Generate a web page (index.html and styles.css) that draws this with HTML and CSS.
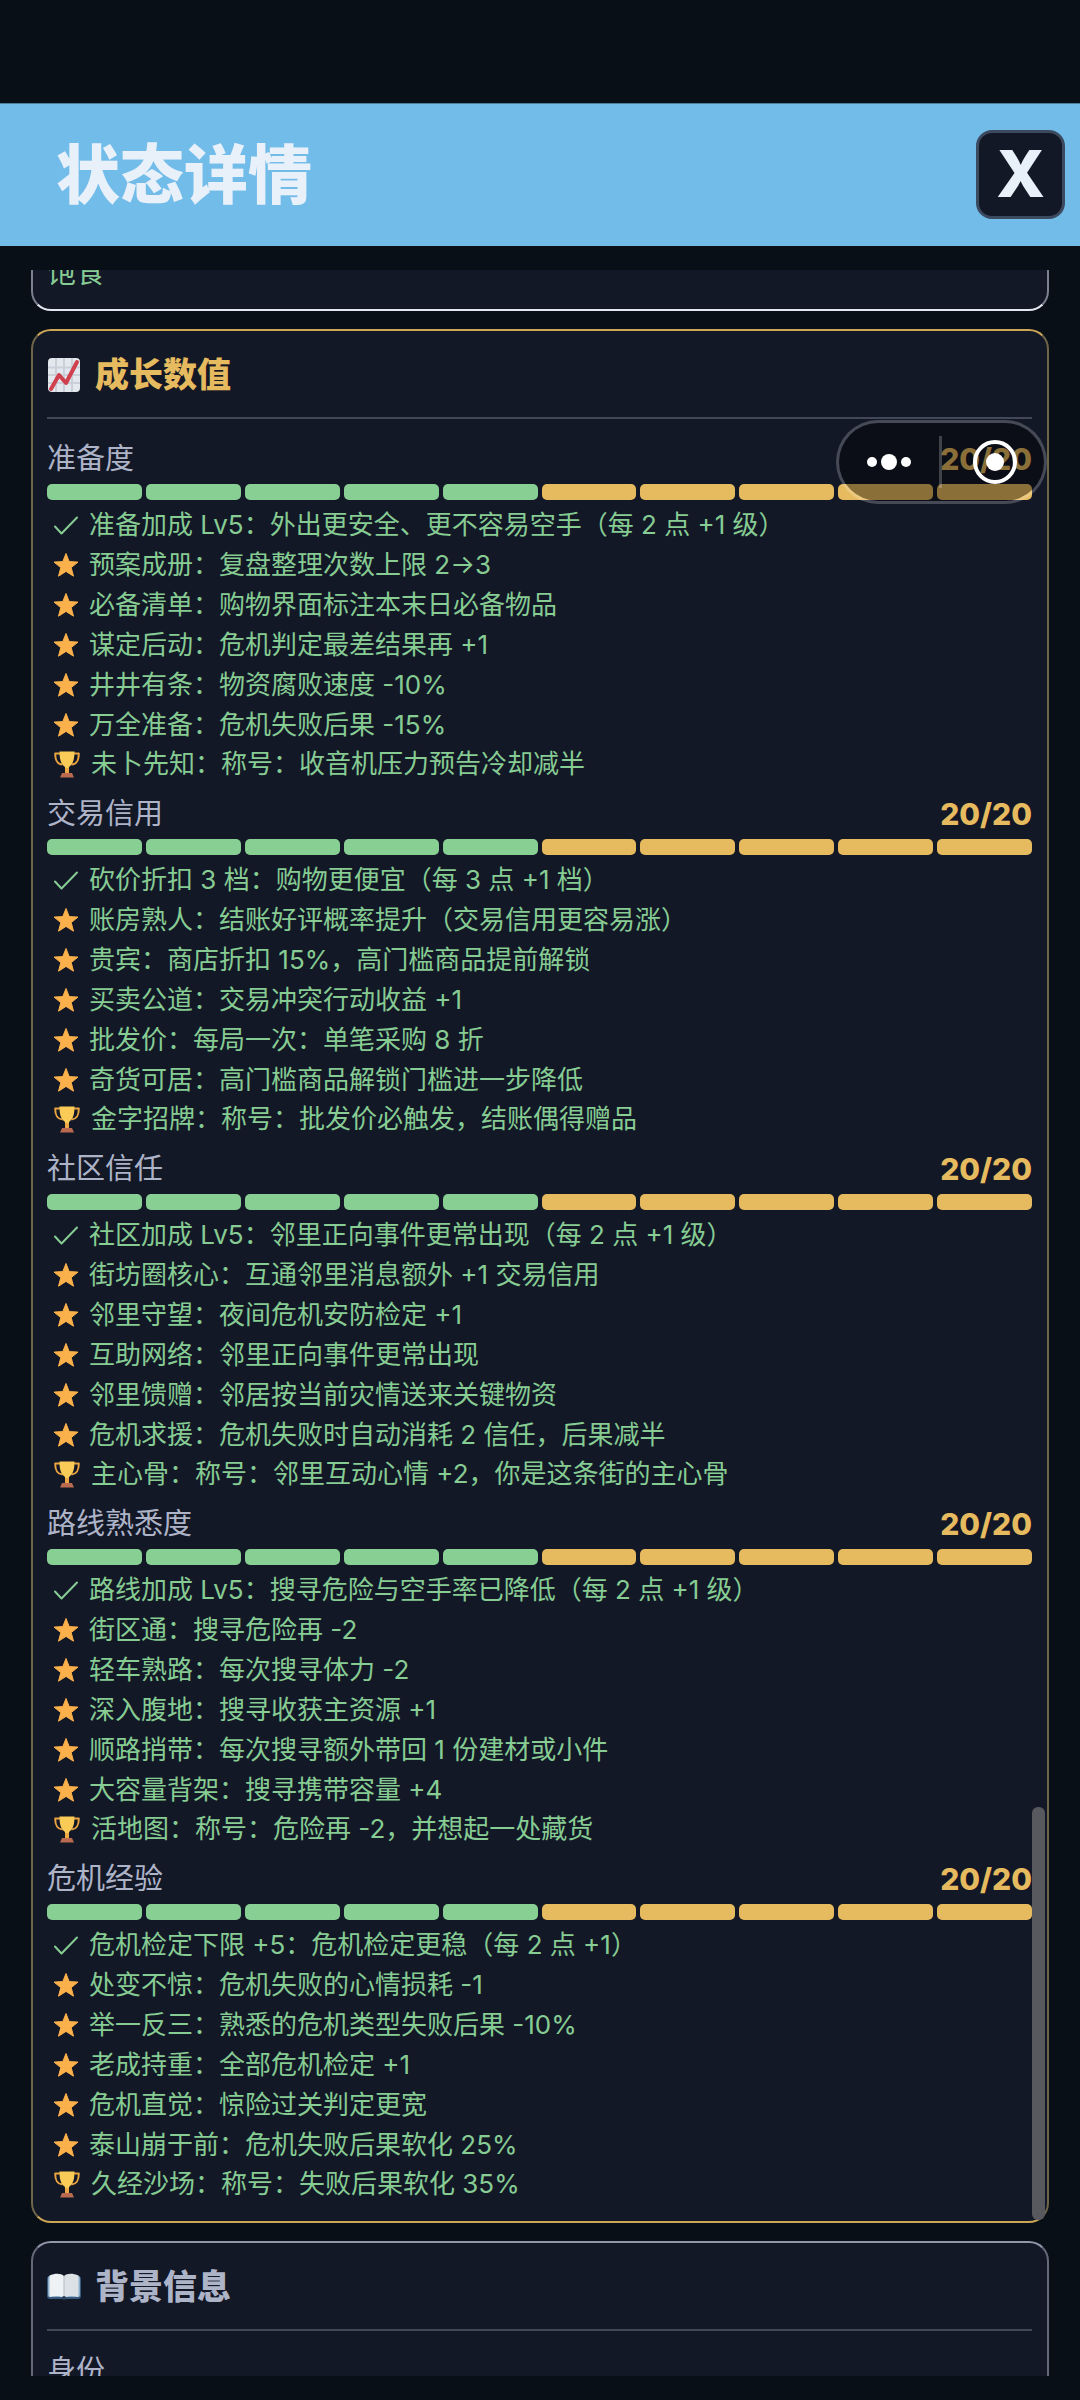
FILE: index.html
```html
<!DOCTYPE html>
<html lang="zh-CN">
<head>
  <meta charset="UTF-8" />
  <meta name="viewport" content="width=device-width, initial-scale=1.0"/>
  <title>状态详情</title>
  <link rel="stylesheet" href="styles.css">
</head>
<body>
  <!-- Shared icons -->
  <svg class="sprite" aria-hidden="true">
    <symbol id="check" viewBox="0 0 26 26">
      <path d="M2 14.5 8.500 21.500 24 5.500" fill="none" stroke="#86cc93" stroke-width="2" stroke-linecap="round" stroke-linejoin="round"/>
    </symbol>
    <symbol id="star" viewBox="0 0 26 26">
      <path d="M13 1.500 16.200 9.600 25 10.100 18.200 15.600 20.500 24.200 13 19.400 5.500 24.200 7.800 15.600 1 10.100 9.800 9.600Z" fill="#fbb14b" stroke="#fbb14b" stroke-width="1" stroke-linejoin="round"/>
    </symbol>
    <symbol id="trophy" viewBox="0 0 28 28">
      <path d="M8 3.500H2.200C2.200 10 3.500 14 9.500 14.500M20 3.500h5.800C25.800 10 24.500 14 18.500 14.500" fill="none" stroke="#e9a33f" stroke-width="2" stroke-linejoin="round"/>
      <path d="M6.500 1.500h15C21.500 9.500 20 14 16 17v5h-4v-5C8 14 6.500 9.500 6.500 1.500Z" fill="#fbcb58"/>
      <path d="M12 18h4v5h-4Z" fill="#eda945"/>
      <path d="M9 23h10l2 4.500H7Z" fill="#b96a4f"/>
    </symbol>
  </svg>

  <header class="topbar">
    <h1>状态详情</h1>
    <button class="close-btn" type="button" aria-label="关闭">X</button>
  </header>

  <main class="content">
    <div class="list">
      <section class="card needs">
        <p class="need-value">饱食</p>
      </section>

      <section class="card growth">
        <h2>
          <svg viewBox="0 0 34 34" aria-hidden="true">
            <rect x="1" y="0" width="32" height="34" rx="4" fill="#e3e8ee"/>
            <path d="M1 9.500h32M1 17h32M1 25h32M9 0v34M17 0v34M25 0v34" stroke="#c9d0da" stroke-width="2"/>
            <path d="M4 31 12 17 19 25 30 4" fill="none" stroke="#d0414f" stroke-width="4" stroke-linecap="round" stroke-linejoin="round"/>
          </svg>
          成长数值
        </h2>

        <div class="stat">
          <div class="stat-head"><h3>准备度</h3><span>20/20</span></div>
          <div class="bar"><i></i><i></i><i></i><i></i><i></i><i></i><i></i><i></i><i></i><i></i></div>
          <ul>
            <li><svg><use href="#check"/></svg>准备加成 Lv5：外出更安全、更不容易空手（每 2 点 +1 级）</li>
            <li><svg><use href="#star"/></svg>预案成册：复盘整理次数上限 2→3</li>
            <li><svg><use href="#star"/></svg>必备清单：购物界面标注本末日必备物品</li>
            <li><svg><use href="#star"/></svg>谋定后动：危机判定最差结果再 +1</li>
            <li><svg><use href="#star"/></svg>井井有条：物资腐败速度 -10%</li>
            <li><svg><use href="#star"/></svg>万全准备：危机失败后果 -15%</li>
            <li class="title-perk"><svg><use href="#trophy"/></svg>未卜先知：称号：收音机压力预告冷却减半</li>
          </ul>
        </div>

        <div class="stat">
          <div class="stat-head"><h3>交易信用</h3><span>20/20</span></div>
          <div class="bar"><i></i><i></i><i></i><i></i><i></i><i></i><i></i><i></i><i></i><i></i></div>
          <ul>
            <li><svg><use href="#check"/></svg>砍价折扣 3 档：购物更便宜（每 3 点 +1 档）</li>
            <li><svg><use href="#star"/></svg>账房熟人：结账好评概率提升（交易信用更容易涨）</li>
            <li><svg><use href="#star"/></svg>贵宾：商店折扣 15%，高门槛商品提前解锁</li>
            <li><svg><use href="#star"/></svg>买卖公道：交易冲突行动收益 +1</li>
            <li><svg><use href="#star"/></svg>批发价：每局一次：单笔采购 8 折</li>
            <li><svg><use href="#star"/></svg>奇货可居：高门槛商品解锁门槛进一步降低</li>
            <li class="title-perk"><svg><use href="#trophy"/></svg>金字招牌：称号：批发价必触发，结账偶得赠品</li>
          </ul>
        </div>

        <div class="stat">
          <div class="stat-head"><h3>社区信任</h3><span>20/20</span></div>
          <div class="bar"><i></i><i></i><i></i><i></i><i></i><i></i><i></i><i></i><i></i><i></i></div>
          <ul>
            <li><svg><use href="#check"/></svg>社区加成 Lv5：邻里正向事件更常出现（每 2 点 +1 级）</li>
            <li><svg><use href="#star"/></svg>街坊圈核心：互通邻里消息额外 +1 交易信用</li>
            <li><svg><use href="#star"/></svg>邻里守望：夜间危机安防检定 +1</li>
            <li><svg><use href="#star"/></svg>互助网络：邻里正向事件更常出现</li>
            <li><svg><use href="#star"/></svg>邻里馈赠：邻居按当前灾情送来关键物资</li>
            <li><svg><use href="#star"/></svg>危机求援：危机失败时自动消耗 2 信任，后果减半</li>
            <li class="title-perk"><svg><use href="#trophy"/></svg>主心骨：称号：邻里互动心情 +2，你是这条街的主心骨</li>
          </ul>
        </div>

        <div class="stat">
          <div class="stat-head"><h3>路线熟悉度</h3><span>20/20</span></div>
          <div class="bar"><i></i><i></i><i></i><i></i><i></i><i></i><i></i><i></i><i></i><i></i></div>
          <ul>
            <li><svg><use href="#check"/></svg>路线加成 Lv5：搜寻危险与空手率已降低（每 2 点 +1 级）</li>
            <li><svg><use href="#star"/></svg>街区通：搜寻危险再 -2</li>
            <li><svg><use href="#star"/></svg>轻车熟路：每次搜寻体力 -2</li>
            <li><svg><use href="#star"/></svg>深入腹地：搜寻收获主资源 +1</li>
            <li><svg><use href="#star"/></svg>顺路捎带：每次搜寻额外带回 1 份建材或小件</li>
            <li><svg><use href="#star"/></svg>大容量背架：搜寻携带容量 +4</li>
            <li class="title-perk"><svg><use href="#trophy"/></svg>活地图：称号：危险再 -2，并想起一处藏货</li>
          </ul>
        </div>

        <div class="stat">
          <div class="stat-head"><h3>危机经验</h3><span>20/20</span></div>
          <div class="bar"><i></i><i></i><i></i><i></i><i></i><i></i><i></i><i></i><i></i><i></i></div>
          <ul>
            <li><svg><use href="#check"/></svg>危机检定下限 +5：危机检定更稳（每 2 点 +1）</li>
            <li><svg><use href="#star"/></svg>处变不惊：危机失败的心情损耗 -1</li>
            <li><svg><use href="#star"/></svg>举一反三：熟悉的危机类型失败后果 -10%</li>
            <li><svg><use href="#star"/></svg>老成持重：全部危机检定 +1</li>
            <li><svg><use href="#star"/></svg>危机直觉：惊险过关判定更宽</li>
            <li><svg><use href="#star"/></svg>泰山崩于前：危机失败后果软化 25%</li>
            <li class="title-perk"><svg><use href="#trophy"/></svg>久经沙场：称号：失败后果软化 35%</li>
          </ul>
        </div>
      </section>

      <section class="card background">
        <h2>
          <svg viewBox="0 0 34 34" aria-hidden="true">
            <rect x="0" y="6" width="34" height="23" rx="3" fill="#39597d"/>
            <rect x="1" y="6" width="32" height="21" rx="2" fill="#8fb0cd"/>
            <path d="M2.500 5.500C8 3 14 3 17 6v22C13 25.500 8 25.500 2.500 27Z" fill="#eef2f4"/>
            <path d="M31.500 5.500C26 3 20 3 17 6v22c4-2.500 9-2.500 14.500-1Z" fill="#dce1e5"/>
            <path d="M17 6v22" stroke="#b3bcc5" stroke-width="1"/>
            <circle cx="17" cy="28" r="2" fill="#28405e"/>
          </svg>
          背景信息
        </h2>
        <div class="stat">
          <div class="stat-head"><h3>身份</h3></div>
        </div>
      </section>
    </div>
    <div class="scroll-thumb"></div>
  </main>

  <!-- Floating menu capsule -->
  <div class="capsule">
    <button class="more-btn" type="button" aria-label="更多">
      <svg viewBox="0 0 44 50" width="44" height="50">
        <circle cx="5" cy="25" r="5"/><circle cx="22" cy="25" r="8"/><circle cx="39" cy="25" r="5"/>
      </svg>
    </button>
    <button class="exit-btn" type="button" aria-label="退出">
      <svg viewBox="0 0 50 50" width="50" height="50">
        <circle cx="25" cy="25" r="20" fill="none" stroke="#fff" stroke-width="4"/><circle cx="25" cy="25" r="9"/>
      </svg>
    </button>
  </div>
</body>
</html>
```
FILE: styles.css
```css
* {
  box-sizing: border-box;
  margin: 0;
  padding: 0;
}

body {
  display: flex;
  flex-direction: column;
  height: 100vh;
  padding: 103px 0 24px;
  background: #080f16;
  color: #aeb4c8;
  font-family: Inter, 'Noto Sans CJK SC', sans-serif;
  overflow: hidden;
}

.sprite {
  position: absolute;
  width: 0;
  height: 0;
}

.topbar {
  display: flex;
  justify-content: space-between;
  align-items: center;
  height: 143px;
  padding: 0 15px 0 56px;
  background: #72bce9;
  border-top: 1px solid #4b7f9b;
  flex-shrink: 0;
}

.topbar h1 {
  color: #e8f0fa;
  font-size: 64px;
  font-weight: 900;
  line-height: 80px;
}

.close-btn {
  width: 89px;
  height: 89px;
  margin-bottom: 2px;
  border: 3px solid #3c4a60;
  border-radius: 16px;
  background: #131827;
  color: #e8f0fa;
  font-family: inherit;
  font-size: 64px;
  font-weight: 800;
  line-height: 80px;
  cursor: pointer;
}

.content {
  position: relative;
  flex: 1;
  min-height: 0;
  margin: 24px 31px 0;
  overflow: hidden;
}

.list {
  display: flex;
  flex-direction: column;
  gap: 18px;
}

.card {
  padding: 20px 15px 18px 14px;
  background: #131827;
  border: 2px solid;
  border-radius: 20px;
}

.needs {
  margin-top: -41px;
  padding-bottom: 14px;
  border-color: #e3e7f0 #7c8090;
}

.need-value {
  color: #86cc93;
  font-size: 29px;
  line-height: 44px;
}

.growth {
  border-color: #cda556 #6f6549;
}

.background {
  border-color: #9397aa #646878;
}

.card h2 {
  display: flex;
  align-items: center;
  gap: 14px;
  padding-bottom: 18px;
  margin-bottom: 21px;
  border-bottom: 2px solid #434858;
  font-size: 34px;
  font-weight: 900;
  line-height: 48px;
}

.card h2 svg {
  width: 34px;
  height: 34px;
}

.growth h2 {
  color: #e6ba5e;
}

.stat + .stat {
  margin-top: 12px;
}

.stat-head {
  display: flex;
  justify-content: space-between;
  height: 36px;
  margin-bottom: 8px;
  line-height: 38px;
}

.stat-head h3 {
  font-size: 29px;
  font-weight: 400;
}

.stat-head span {
  color: #e6ba5e;
  font-size: 30px;
  font-weight: 800;
}

.bar {
  display: grid;
  grid-template-columns: repeat(10, 1fr);
  gap: 4px;
  height: 16px;
  margin-bottom: 5px;
}

.bar i {
  background: #e6ba5e;
  border-radius: 5px;
}

.bar i:nth-child(-n+5) {
  background: #88cf94;
}

.stat ul {
  list-style: none;
}

.stat li {
  display: flex;
  align-items: center;
  gap: 10px;
  padding-left: 6px;
  color: #86cc93;
  font-size: 26px;
  line-height: 40px;
}

.stat li svg {
  width: 26px;
  height: 26px;
  flex-shrink: 0;
}

.stat .title-perk {
  line-height: 38px;
}

.stat .title-perk svg {
  width: 28px;
  height: 28px;
}

.scroll-thumb {
  position: absolute;
  top: 73%;
  right: 4px;
  bottom: 156px;
  width: 13px;
  border-radius: 6px;
  background: #57595e;
}

.capsule {
  position: absolute;
  top: 420px;
  right: 33px;
  display: flex;
  width: 211px;
  height: 84px;
  border: 3px solid rgba(255, 255, 255, 0.22);
  border-radius: 42px;
  background: rgba(0, 0, 0, 0.4);
  background-clip: padding-box;
}

.capsule button {
  display: flex;
  justify-content: center;
  align-items: center;
  border: none;
  background: none;
  cursor: pointer;
}

.capsule .more-btn {
  width: 100px;
}

.capsule .exit-btn {
  position: relative;
  flex: 1;
  padding-left: 6px;
}

.exit-btn::before {
  content: '';
  position: absolute;
  left: 0;
  top: 13px;
  bottom: 13px;
  width: 3px;
  background: rgba(255, 255, 255, 0.22);
}

.capsule svg {
  fill: #fff;
}
```
